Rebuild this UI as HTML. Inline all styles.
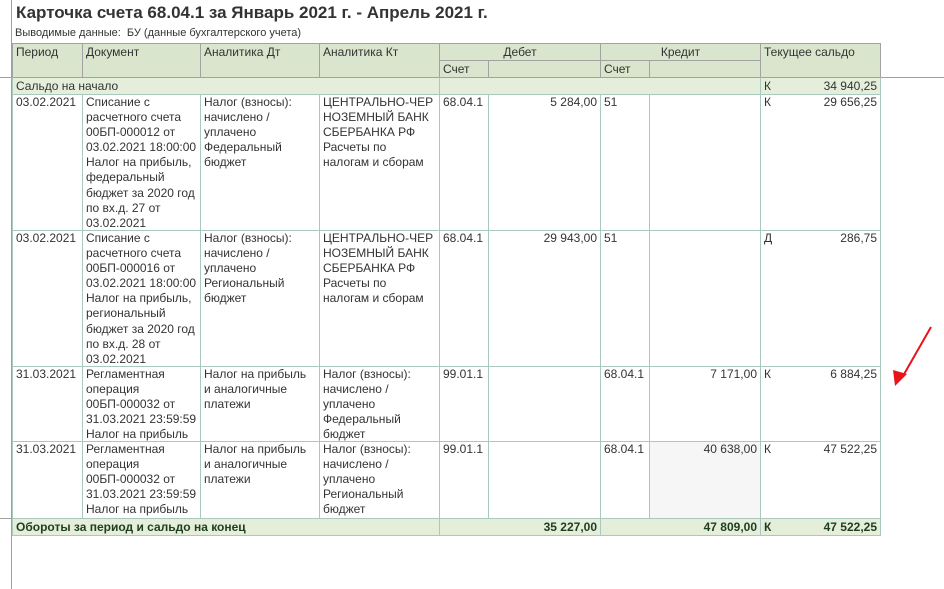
<!DOCTYPE html>
<html><head><meta charset="utf-8"><style>
body{margin:0;width:944px;height:589px;background:#fff;position:relative;overflow:hidden;font-family:"Liberation Sans",Arial,sans-serif;color:#333;}
.a{position:absolute;}
.c{position:absolute;box-sizing:border-box;font-size:12px;line-height:15.1px;padding:0 3px;white-space:nowrap;overflow:hidden;border-left:1px solid #a9c9bd;border-top:1px solid #a9c9bd;}
.h{background:#d9e5cd;border-color:#a2a2a2;color:#333;}
.s{background:#e4eedb;}
.r{text-align:right;}
.ctr{text-align:center;}
.b{font-weight:bold;color:#1f3d1f;}
</style></head><body>
<div class="a" style="left:11px;top:0;width:1px;height:589px;background:#a0a0a0"></div>
<div class="a" style="left:0;top:77px;width:12px;height:1px;background:#a0a0a0"></div>
<div class="a" style="left:880px;top:77px;width:64px;height:1px;background:#a0a0a0"></div>
<div class="a" style="left:0;top:518px;width:12px;height:1px;background:#a0a0a0"></div>
<div class="a" style="left:16px;top:3px;font-size:17px;font-weight:bold;color:#333">Карточка счета 68.04.1 за Январь 2021 г. - Апрель 2021 г.</div>
<div class="a" style="left:15px;top:27px;font-size:11px;color:#333">Выводимые данные:&nbsp; БУ (данные бухгалтерского учета)</div>

<div class="c h" style="left:12px;top:43px;width:70px;height:35px;padding-top:1px">Период</div>
<div class="c h" style="left:82px;top:43px;width:118px;height:35px;padding-top:1px">Документ</div>
<div class="c h" style="left:200px;top:43px;width:119px;height:35px;padding-top:1px">Аналитика Дт</div>
<div class="c h" style="left:319px;top:43px;width:120px;height:35px;padding-top:1px">Аналитика Кт</div>
<div class="c h ctr" style="left:439px;top:43px;width:161px;height:18px;padding-top:1px">Дебет</div>
<div class="c h ctr" style="left:600px;top:43px;width:160px;height:18px;padding-top:1px">Кредит</div>
<div class="c h" style="left:760px;top:43px;width:121px;height:35px;border-right:1px solid #a2a2a2;padding-top:1px">Текущее сальдо</div>
<div class="c h" style="left:439px;top:60px;width:49px;height:18px;padding-top:1px">Счет</div>
<div class="c h" style="left:488px;top:60px;width:112px;height:18px"></div>
<div class="c h" style="left:600px;top:60px;width:49px;height:18px;padding-top:1px">Счет</div>
<div class="c h" style="left:649px;top:60px;width:111px;height:18px"></div>

<div class="c s" style="left:12px;top:77px;width:427px;height:18px;border-top-color:#a2a2a2;padding-top:1px">Сальдо на начало</div>
<div class="c s" style="left:439px;top:77px;width:321px;height:18px;border-top-color:#a2a2a2"></div>
<div class="c s" style="left:760px;top:77px;width:121px;height:18px;border-right:1px solid #a9c9bd;border-top-color:#a2a2a2;padding-top:1px">К<span style="float:right">34 940,25</span></div>

<div class="c" style="left:12px;top:94px;width:70px;height:137px">03.02.2021</div>
<div class="c" style="left:82px;top:94px;width:118px;height:137px">Списание с<br>расчетного счета<br>00БП-000012 от<br>03.02.2021 18:00:00<br>Налог на прибыль,<br>федеральный<br>бюджет за 2020 год<br>по вх.д. 27 от<br>03.02.2021</div>
<div class="c" style="left:200px;top:94px;width:119px;height:137px">Налог (взносы):<br>начислено /<br>уплачено<br>Федеральный<br>бюджет</div>
<div class="c" style="left:319px;top:94px;width:120px;height:137px">ЦЕНТРАЛЬНО-ЧЕР<br>НОЗЕМНЫЙ БАНК<br>СБЕРБАНКА РФ<br>Расчеты по<br>налогам и сборам</div>
<div class="c" style="left:439px;top:94px;width:49px;height:137px">68.04.1</div>
<div class="c r" style="left:488px;top:94px;width:112px;height:137px">5 284,00</div>
<div class="c" style="left:600px;top:94px;width:49px;height:137px">51</div>
<div class="c" style="left:649px;top:94px;width:111px;height:137px"></div>
<div class="c" style="left:760px;top:94px;width:121px;height:137px;border-right:1px solid #a9c9bd">К<span style="float:right">29 656,25</span></div>

<div class="c" style="left:12px;top:230px;width:70px;height:137px">03.02.2021</div>
<div class="c" style="left:82px;top:230px;width:118px;height:137px">Списание с<br>расчетного счета<br>00БП-000016 от<br>03.02.2021 18:00:00<br>Налог на прибыль,<br>региональный<br>бюджет за 2020 год<br>по вх.д. 28 от<br>03.02.2021</div>
<div class="c" style="left:200px;top:230px;width:119px;height:137px">Налог (взносы):<br>начислено /<br>уплачено<br>Региональный<br>бюджет</div>
<div class="c" style="left:319px;top:230px;width:120px;height:137px">ЦЕНТРАЛЬНО-ЧЕР<br>НОЗЕМНЫЙ БАНК<br>СБЕРБАНКА РФ<br>Расчеты по<br>налогам и сборам</div>
<div class="c" style="left:439px;top:230px;width:49px;height:137px">68.04.1</div>
<div class="c r" style="left:488px;top:230px;width:112px;height:137px">29 943,00</div>
<div class="c" style="left:600px;top:230px;width:49px;height:137px">51</div>
<div class="c" style="left:649px;top:230px;width:111px;height:137px"></div>
<div class="c" style="left:760px;top:230px;width:121px;height:137px;border-right:1px solid #a9c9bd">Д<span style="float:right">286,75</span></div>

<div class="c" style="left:12px;top:366px;width:70px;height:76px">31.03.2021</div>
<div class="c" style="left:82px;top:366px;width:118px;height:76px">Регламентная<br>операция<br>00БП-000032 от<br>31.03.2021 23:59:59<br>Налог на прибыль</div>
<div class="c" style="left:200px;top:366px;width:119px;height:76px">Налог на прибыль<br>и аналогичные<br>платежи</div>
<div class="c" style="left:319px;top:366px;width:120px;height:76px">Налог (взносы):<br>начислено /<br>уплачено<br>Федеральный<br>бюджет</div>
<div class="c" style="left:439px;top:366px;width:49px;height:76px">99.01.1</div>
<div class="c" style="left:488px;top:366px;width:112px;height:76px"></div>
<div class="c" style="left:600px;top:366px;width:49px;height:76px">68.04.1</div>
<div class="c r" style="left:649px;top:366px;width:111px;height:76px">7 171,00</div>
<div class="c" style="left:760px;top:366px;width:121px;height:76px;border-right:1px solid #a9c9bd">К<span style="float:right">6 884,25</span></div>

<div class="c" style="left:12px;top:441px;width:70px;height:78px">31.03.2021</div>
<div class="c" style="left:82px;top:441px;width:118px;height:78px">Регламентная<br>операция<br>00БП-000032 от<br>31.03.2021 23:59:59<br>Налог на прибыль</div>
<div class="c" style="left:200px;top:441px;width:119px;height:78px">Налог на прибыль<br>и аналогичные<br>платежи</div>
<div class="c" style="left:319px;top:441px;width:120px;height:78px">Налог (взносы):<br>начислено /<br>уплачено<br>Региональный<br>бюджет</div>
<div class="c" style="left:439px;top:441px;width:49px;height:78px">99.01.1</div>
<div class="c" style="left:488px;top:441px;width:112px;height:78px"></div>
<div class="c" style="left:600px;top:441px;width:49px;height:78px">68.04.1</div>
<div class="c r" style="left:649px;top:441px;width:111px;height:78px;background:#f6f6f6">40 638,00</div>
<div class="c" style="left:760px;top:441px;width:121px;height:78px;border-right:1px solid #a9c9bd">К<span style="float:right">47 522,25</span></div>

<div class="c s b" style="left:12px;top:518px;width:427px;height:18px;border-bottom:1px solid #a9c9bd;padding-top:1px">Обороты за период и сальдо на конец</div>
<div class="c s b r" style="left:439px;top:518px;width:161px;height:18px;border-bottom:1px solid #a9c9bd;padding-top:1px">35 227,00</div>
<div class="c s b r" style="left:600px;top:518px;width:160px;height:18px;border-bottom:1px solid #a9c9bd;padding-top:1px">47 809,00</div>
<div class="c s b" style="left:760px;top:518px;width:121px;height:18px;border-right:1px solid #a9c9bd;border-bottom:1px solid #a9c9bd;padding-top:1px">К<span style="float:right">47 522,25</span></div>

<svg class="a" style="left:885px;top:320px" width="55" height="70" viewBox="0 0 55 70">
<line x1="46" y1="7" x2="18" y2="56" stroke="#e8141a" stroke-width="2"/>
<polygon points="10,66 8,50 22,54" fill="#e8141a"/>
</svg>
</body></html>
